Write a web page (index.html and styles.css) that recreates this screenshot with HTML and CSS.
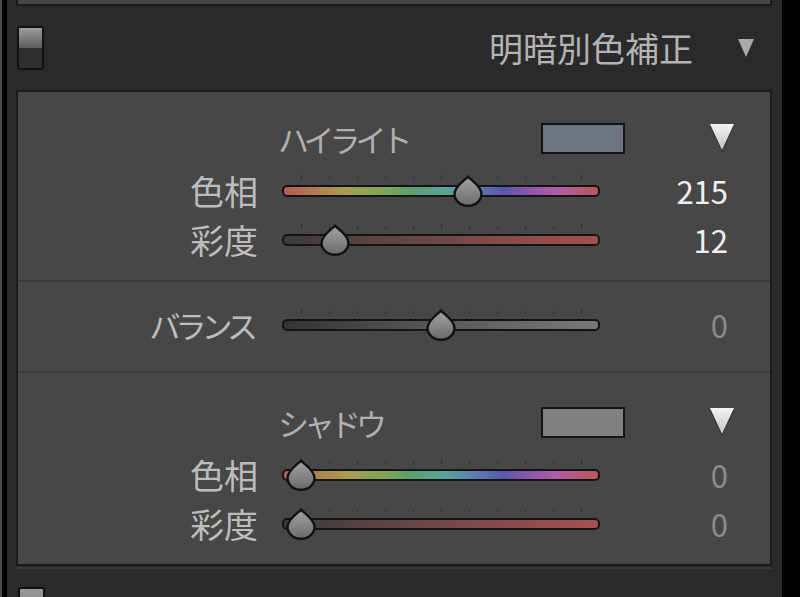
FILE: index.html
```html
<!DOCTYPE html>
<html lang="ja">
<head>
  <meta charset="UTF-8" />
  <title>明暗別色補正</title>
  <link rel="stylesheet" href="styles.css">
</head>
<body>

  <div class="sidebar">
    <div class="prev-panel"></div>

    <div class="section-header">
      <div class="toggle"><span class="toggle-on"></span></div>
      <h2 class="section-title">明暗別色補正</h2>
      <svg class="header-arrow" width="18" height="20" viewBox="0 0 18 20">
        <polygon points="1,1 17,1 9,19" fill="#a9a9a9"/>
      </svg>
    </div>

    <div class="panel">
      <!-- ハイライト -->
      <div class="group">
        <div class="group-head">
          <span class="group-name kana">ハイライト</span>
          <span class="swatch swatch-highlight"></span>
          <svg class="picker-arrow" width="28" height="32" viewBox="0 0 28 32">
            <defs>
              <linearGradient id="arrowFill" x1="0" y1="0" x2="0" y2="1">
                <stop offset="0" stop-color="#f4f4f4"/>
                <stop offset="1" stop-color="#c4c4c4"/>
              </linearGradient>
            </defs>
            <polygon points="2,3 26,3 14,29" fill="#2e2e2e" transform="translate(0,1)"/>
            <polygon points="2,2 26,2 14,28" fill="url(#arrowFill)"/>
          </svg>
        </div>
        <div class="row">
          <span class="label">色相</span>
          <div class="slider">
            <span class="ticks"></span><span class="ticks-major"></span>
            <div class="track track-hue"></div>
            <svg class="thumb" style="left: 186px" width="32" height="32" viewBox="0 0 32 32">
              <use href="#drop"/>
            </svg>
          </div>
          <span class="value">215</span>
        </div>
        <div class="row">
          <span class="label">彩度</span>
          <div class="slider">
            <span class="ticks"></span><span class="ticks-major"></span>
            <div class="track track-sat"></div>
            <svg class="thumb" style="left: 53px" width="32" height="32" viewBox="0 0 32 32">
              <use href="#drop"/>
            </svg>
          </div>
          <span class="value">12</span>
        </div>
      </div>

      <!-- バランス -->
      <div class="group group-balance">
        <div class="row">
          <span class="label kana">バランス</span>
          <div class="slider">
            <span class="ticks"></span><span class="ticks-major"></span>
            <div class="track track-balance"></div>
            <svg class="thumb" style="left: 159px" width="32" height="32" viewBox="0 0 32 32">
              <use href="#drop"/>
            </svg>
          </div>
          <span class="value value-dim">0</span>
        </div>
      </div>

      <!-- シャドウ -->
      <div class="group group-shadow">
        <div class="group-head">
          <span class="group-name kana">シャドウ</span>
          <span class="swatch swatch-shadow"></span>
          <svg class="picker-arrow" width="28" height="32" viewBox="0 0 28 32">
            <polygon points="2,3 26,3 14,29" fill="#2e2e2e" transform="translate(0,1)"/>
            <polygon points="2,2 26,2 14,28" fill="url(#arrowFill)"/>
          </svg>
        </div>
        <div class="row">
          <span class="label">色相</span>
          <div class="slider">
            <span class="ticks"></span><span class="ticks-major"></span>
            <div class="track track-hue"></div>
            <svg class="thumb" style="left: 19px" width="32" height="32" viewBox="0 0 32 32">
              <use href="#drop"/>
            </svg>
          </div>
          <span class="value value-dim">0</span>
        </div>
        <div class="row">
          <span class="label">彩度</span>
          <div class="slider">
            <span class="ticks"></span><span class="ticks-major"></span>
            <div class="track track-sat"></div>
            <svg class="thumb" style="left: 19px" width="32" height="32" viewBox="0 0 32 32">
              <use href="#drop"/>
            </svg>
          </div>
          <span class="value value-dim">0</span>
        </div>
      </div>
    </div>

    <div class="next-header">
      <div class="toggle toggle-small"></div>
    </div>
  </div>

  <!-- shared slider knob -->
  <svg width="0" height="0" class="defs">
    <defs>
      <linearGradient id="dropFill" x1="0" y1="0" x2="0" y2="1">
        <stop offset="0" stop-color="#a4a4a4"/>
        <stop offset="1" stop-color="#6a6a6a"/>
      </linearGradient>
      <path id="drop" d="M16 1.5 C18 4.5 29.5 11 29.5 19 A13.5 11.8 0 0 1 2.5 19 C2.5 11 14 4.5 16 1.5 Z"
            fill="url(#dropFill)" stroke="#111" stroke-width="2.4" stroke-linejoin="round"/>
    </defs>
  </svg>

</body>
</html>
```

FILE: styles.css
```css
body {
  margin: 0;
  height: 597px;
  overflow: hidden;
  background: #000;
  border-left: 2px solid #4a4a4a;
  font-family: "Noto Sans CJK JP", "Noto Sans", sans-serif;
}

.defs {
  position: absolute;
}

.sidebar {
  margin-left: 5px;
  width: 756px;
  height: 597px;
  overflow: hidden;
  padding: 0 10px 0 9px;
  background: #2a2a2a;
}

.prev-panel {
  height: 4px;
  background: #474747;
  border: 2px solid #1b1b1b;
  border-top: none;
}

.section-header {
  height: 84px;
  display: flex;
  align-items: center;
}

.toggle {
  width: 23px;
  height: 40px;
  margin-left: 1px;
  border: 2px solid #111;
  border-radius: 3px;
  background: #2f2f2f;
  overflow: hidden;
}

.toggle-on {
  display: block;
  height: 20px;
  background: linear-gradient(to bottom, #9c9c9c, #5d5d5d);
}

.section-title {
  margin: 0 44px 0 auto;
  font-size: 34px;
  font-weight: normal;
  color: #b4b4b4;
  line-height: 1;
}

.header-arrow {
  margin-right: 17px;
}

.panel {
  height: 472px;
  background: #474747;
  border: 2px solid #1c1c1c;
}

.group {
  height: 190px;
  padding-top: 30px;
  box-sizing: border-box;
  border-bottom: 2px solid #393939;
}

.group-balance {
  height: 91px;
  padding-top: 18px;
}

.group-shadow {
  height: 189px;
  padding-top: 33px;
  border-bottom: none;
}

.group-head {
  height: 32px;
  margin-bottom: 12px;
  display: flex;
  align-items: center;
}

.group-name {
  width: 263px;
  margin-left: 260px;
  color: #b0b0b0;
}

.kana {
  font-size: 31px;
  letter-spacing: -5px;
  line-height: 1;
}

.swatch {
  width: 80px;
  height: 27px;
  border: 2px solid #141414;
}

.swatch-highlight {
  background: #6f7580;
}

.swatch-shadow {
  background: #808080;
}

.picker-arrow {
  margin-left: auto;
  margin-right: 34px;
}

.row {
  height: 49px;
  display: flex;
  align-items: center;
}

.label {
  width: 240px;
  text-align: right;
  font-size: 34px;
  line-height: 1;
  color: #bdbdbd;
}

.label.kana {
  font-size: 31px;
  letter-spacing: -5px;
  padding-right: 5px;
  box-sizing: border-box;
}

.slider {
  position: relative;
  width: 318px;
  height: 12px;
  margin-left: 24px;
}

.track {
  height: 8px;
  border: 2px solid #141414;
  border-radius: 5px;
}

.track-hue {
  background: linear-gradient(to right,
    #b85858 0%, #b07e50 10%, #a89e50 20%, #80a458 32%, #5ea06c 40%,
    #5aa29e 52%, #5c78b4 62%, #5c56ac 70%, #9458aa 80%, #b05ca4 87%, #b85858 100%);
}

.track-sat {
  background: linear-gradient(to right, #3c3c3c, #664646 40%, #a65050);
}

.track-balance {
  background: linear-gradient(to right, #333, #5a5a5a 50%, #787878);
}

.ticks,
.ticks-major {
  position: absolute;
  left: 19px;
  width: 281px;
}

.ticks {
  top: -8px;
  height: 3px;
  background: repeating-linear-gradient(to right, #2e2e2e 0 1px, transparent 1px 28px);
}

.ticks-major {
  top: -10px;
  height: 5px;
  background: repeating-linear-gradient(to right, #2e2e2e 0 1px, transparent 1px 140px);
}

.thumb {
  position: absolute;
  top: -10px;
  margin-left: -16px;
}

.value {
  width: 128px;
  text-align: right;
  font-size: 31px;
  line-height: 1;
  color: #f0f0f0;
}

.value-dim {
  color: #8c8c8c;
}

.next-header {
  height: 28px;
  border-top: 2px solid #3a3a3a;
  margin-top: 1px;
  padding-top: 18px;
}

.toggle-small {
  margin-left: 2px;
  background: linear-gradient(to bottom, #9a9a9a, #707070);
}
```
